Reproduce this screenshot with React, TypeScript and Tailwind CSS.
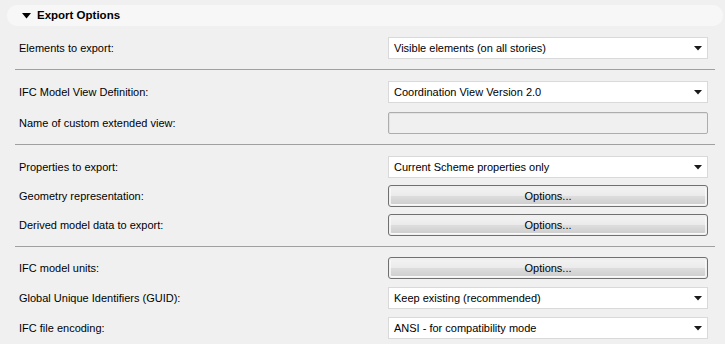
const font = { fontFamily: "Tahoma, 'Liberation Sans', Arial, sans-serif" };

type Row =
  | { label: string; kind: "select"; value: string }
  | { label: string; kind: "button" }
  | { label: string; kind: "disabled" };

const groups: { rows: Row[]; pad: string; gap: string }[] = [
  {
    pad: "pt-[11px] pb-[10px]",
    gap: "gap-[8px]",
    rows: [{ label: "Elements to export:", kind: "select", value: "Visible elements (on all stories)" }],
  },
  {
    pad: "pt-[11px] pb-[10px]",
    gap: "gap-[9px]",
    rows: [
      { label: "IFC Model View Definition:", kind: "select", value: "Coordination View Version 2.0" },
      { label: "Name of custom extended view:", kind: "disabled" },
    ],
  },
  {
    pad: "pt-[11px] pb-[10px]",
    gap: "gap-[7px]",
    rows: [
      { label: "Properties to export:", kind: "select", value: "Current Scheme properties only" },
      { label: "Geometry representation:", kind: "button" },
      { label: "Derived model data to export:", kind: "button" },
    ],
  },
  {
    pad: "pt-[10px] pb-[5px]",
    gap: "gap-[8px]",
    rows: [
      { label: "IFC model units:", kind: "button" },
      { label: "Global Unique Identifiers (GUID):", kind: "select", value: "Keep existing (recommended)" },
      { label: "IFC file encoding:", kind: "select", value: "ANSI - for compatibility mode" },
    ],
  },
];

function Control({ row }: { row: Row }) {
  if (row.kind === "select") {
    return (
      <div className="flex h-[22px] w-[320px] items-center justify-between border border-[#d9d9d9] bg-white pl-[5px] pr-[4px] text-[11px] text-black">
        <span>{row.value}</span>
        <svg width="8" height="5" viewBox="0 0 8 5" className="mr-[1px]">
          <path d="M0 0h8L4 4.5z" fill="#1a1a1a" />
        </svg>
      </div>
    );
  }
  if (row.kind === "button") {
    return (
      <div className="h-[22px] w-[320px] rounded-[3px] border border-[#707070] p-px">
        <div className="flex h-full w-full items-center justify-center rounded-[2px] border border-[#fcfcfc]/70 bg-[linear-gradient(#f2f2f2_0%,#ebebeb_48%,#dddddd_52%,#cfcfcf_100%)] text-[11px] text-black">
          Options...
        </div>
      </div>
    );
  }
  return <div className="h-[22px] w-[320px] rounded-[2px] border border-[#adadad] bg-[#f0f0f0] shadow-[inset_1px_1px_0_#e3e3e3]" />;
}

export default function App() {
  return (
    <div className="h-[344px] w-[725px] overflow-hidden bg-[#f0f0f0] text-[11px] text-black" style={font}>
      <div className="ml-[7px] mt-[5px] flex h-[21px] w-[716px] items-center rounded-[10px] bg-[#f7f7f7] pl-[15px]">
        <svg width="9" height="6" viewBox="0 0 9 6">
          <path d="M0 0h9L4.5 5.5z" fill="#000" />
        </svg>
        <span className="ml-[6px] text-[11.5px] font-bold">Export Options</span>
      </div>
      {groups.map((g, gi) => (
        <div key={gi}>
          <div className={`flex flex-col ${g.gap} ${g.pad}`}>
            {g.rows.map((r) => (
              <div key={r.label} className="flex items-center">
                <span className="w-[388px] shrink-0 pl-[19px]">{r.label}</span>
                <Control row={r} />
              </div>
            ))}
          </div>
          {gi < groups.length - 1 && <div className="ml-[15px] h-px w-[700px] bg-[#a0a0a0]" />}
        </div>
      ))}
    </div>
  );
}
